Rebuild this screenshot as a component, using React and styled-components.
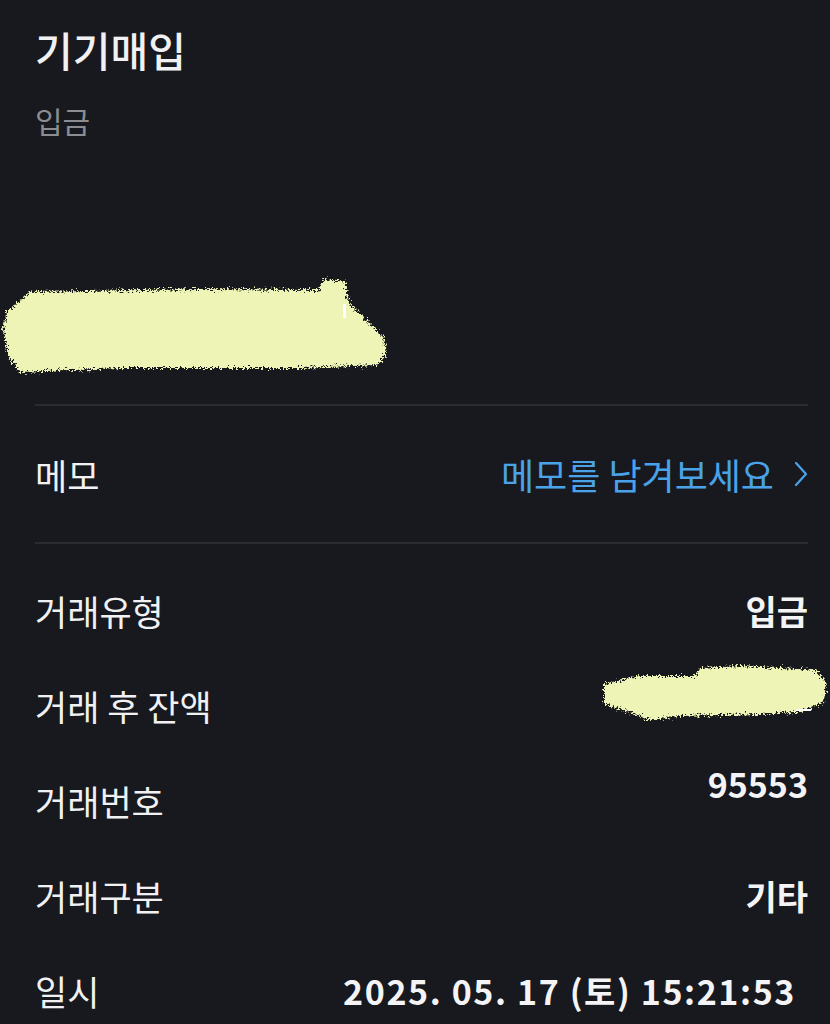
import styled, { createGlobalStyle } from "styled-components";

const GlobalStyle = createGlobalStyle`
    html, body {
        margin: 0;
        padding: 0;
        background: #17191e;
    }
    body {
        font-family: "Noto Sans CJK KR", "Noto Sans", sans-serif;
        color: #f1f1f3;
    }
`;

const Page = styled.div`
    min-height: 1024px;
    padding: 0 22px 0 35px;
    background: #17191e;
    overflow: hidden;
`;

const Title = styled.h1`
    margin: 25px 0 0;
    font-size: 41px;
    font-weight: 500;
    line-height: 49px;
`;

const SubTitle = styled.div`
    margin-top: 26px;
    font-size: 30px;
    line-height: 40px;
    color: #8c8d92;
`;

const AmountBlock = styled.div`
    height: 264px;
    display: flex;
    align-items: flex-end;
    padding-bottom: 28px;
    box-sizing: border-box;
    margin-left: -35px;
`;

const Divider = styled.div`
    height: 2px;
    background: #2a2c31;
`;

const MemoRow = styled.div`
    height: 136px;
    display: flex;
    align-items: center;
    justify-content: space-between;
`;

const Label = styled.span`
    font-size: 35px;
    font-weight: 400;
    color: #f1f1f3;
`;

const MemoLink = styled.a`
    display: flex;
    align-items: center;
    gap: 20px;
    font-size: 36px;
    color: #4aa2e8;
    text-decoration: none;
    cursor: pointer;
`;

const InfoList = styled.div`
    padding-top: 19px;
`;

const InfoRow = styled.div`
    height: 95px;
    display: flex;
    align-items: center;
    justify-content: space-between;
`;

const Value = styled.span`
    font-size: 34px;
    font-weight: 700;
    color: #f4f4f6;
    letter-spacing: ${(props) => props.spread || 0}px;
    margin-bottom: ${(props) => props.raise || 0}px;
    margin-right: ${(props) => props.inset || 0}px;
`;

const Redacted = styled.div`
    display: flex;
    margin-right: ${(props) => props.overhang || 0}px;
    margin-bottom: ${(props) => props.raise || 0}px;
`;

function Scribble({ width, height, d, tick }) {
    const id = "rough" + width;
    return (
        <svg width={width} height={height} viewBox={`0 0 ${width} ${height}`}>
            <defs>
                <filter id={id} x="-5%" y="-10%" width="110%" height="120%">
                    <feTurbulence type="fractalNoise" baseFrequency="0.55" numOctaves="3" seed="4" />
                    <feDisplacementMap in="SourceGraphic" scale="11" xChannelSelector="R" yChannelSelector="G" />
                </filter>
            </defs>
            <path d={d} fill="#eef3b6" filter={`url(#${id})`} />
            {tick && <rect x={tick.x} y={tick.y} width={tick.w} height={tick.h} fill="#ffffff" />}
        </svg>
    );
}

function ChevronRight() {
    return (
        <svg width="14" height="26" viewBox="0 0 14 26" fill="none">
            <path d="M2 2 L12 13 L2 24" stroke="#4aa2e8" strokeWidth="2.2" strokeLinecap="round" strokeLinejoin="round" />
        </svg>
    );
}

export default function App() {
    return (
        <Page>
            <GlobalStyle />
            <Title>기기매입</Title>
            <SubTitle>입금</SubTitle>

            {/* amount, hidden by hand */}
            <AmountBlock>
                <Scribble
                    width={392}
                    height={100}
                    d="M30 16 L200 13 L318 14 L324 3 L345 6 L349 27 L362 40 L384 62 L386 78 L378 89 L300 92 L120 92 L20 96 L8 80 L3 52 L7 36 Z"
                    tick={{ x: 343, y: 28, w: 3, h: 14 }}
                />
            </AmountBlock>

            <Divider />
            <MemoRow>
                <Label>메모</Label>
                <MemoLink>
                    메모를 남겨보세요
                    <ChevronRight />
                </MemoLink>
            </MemoRow>
            <Divider />

            <InfoList>
                <InfoRow>
                    <Label>거래유형</Label>
                    <Value>입금</Value>
                </InfoRow>
                <InfoRow>
                    <Label>거래 후 잔액</Label>
                    <Redacted overhang={-22} raise={22}>
                        <Scribble
                            width={230}
                            height={66}
                            d="M4 22 L40 14 L95 14 L100 6 L140 4 L215 8 L226 20 L224 40 L200 50 L160 52 L80 54 L50 58 L30 50 L4 42 Z"
                            tick={{ x: 196, y: 47, w: 15, h: 2 }}
                        />
                    </Redacted>
                </InfoRow>
                <InfoRow>
                    <Label>거래번호</Label>
                    <Value raise={34}>95553</Value>
                </InfoRow>
                <InfoRow>
                    <Label>거래구분</Label>
                    <Value>기타</Value>
                </InfoRow>
                <InfoRow>
                    <Label>일시</Label>
                    <Value inset={12} spread={1.6}>2025. 05. 17 (토) 15:21:53</Value>
                </InfoRow>
            </InfoList>
        </Page>
    );
}
